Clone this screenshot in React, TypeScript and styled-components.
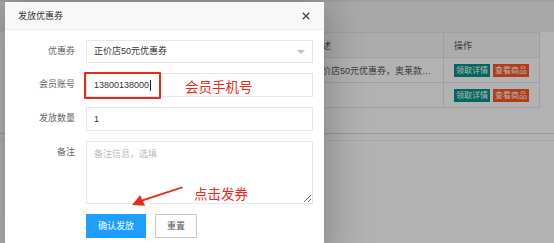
import React from "react";
import styled, { createGlobalStyle } from "styled-components";

const GlobalStyle = createGlobalStyle`
  html, body {
    margin: 0;
    padding: 0;
    background: #fff;
  }
  body {
    font-family: "Liberation Sans", "Noto Sans CJK SC", sans-serif;
  }
`;

const rows = [
  { desc: "正价店50元优惠券，奥莱款都可以使用" },
  { desc: "" }
];

const App: React.FC = () => {
  return (
    <Page>
      <GlobalStyle />
      <TopBand />
      <Table>
        <colgroup>
          <col width="287" />
          <col width="141" />
          <col width="96" />
        </colgroup>
        <thead>
          <tr>
            <Th>名称</Th>
            <Th>描述</Th>
            <Th>操作</Th>
          </tr>
        </thead>
        <tbody>
          {rows.map((r, i) => (
            <tr key={i}>
              <Td>正价店50元优惠券</Td>
              <Td>
                <Ellipsis>{r.desc}</Ellipsis>
              </Td>
              <Td>
                <Actions>
                  <MiniButton $tone="green">领取详情</MiniButton>
                  <MiniButton $tone="orange">查看商品</MiniButton>
                </Actions>
              </Td>
            </tr>
          ))}
        </tbody>
      </Table>
      <Pager />
      <Shade />

      <Dialog>
        <Header>
          <Title>发放优惠券</Title>
          <Close>
            <svg width="8" height="8" viewBox="0 0 8 8">
              <path d="M0.8 0.8 L7.2 7.2 M7.2 0.8 L0.8 7.2" stroke="#444" strokeWidth="1.3" />
            </svg>
          </Close>
        </Header>
        <Body>
          <Row>
            <Label>优惠券</Label>
            <Select>
              正价店50元优惠券
              <Caret />
            </Select>
          </Row>
          <Row>
            <Label>会员账号</Label>
            <Field>
              13800138000
              <Cursor />
            </Field>
            <Highlight />
            <Note $left={180} $top={6}>
              会员手机号
            </Note>
          </Row>
          <Row>
            <Label>发放数量</Label>
            <Field>1</Field>
          </Row>
          <Row>
            <Label>备注</Label>
            <Memo placeholder="备注信息，选填" />
          </Row>
          <Row>
            <Label />
            <Button $primary>确认发放</Button>
            <Button>重置</Button>
            <Note $left={189} $top={-28}>
              点击发券
            </Note>
            <Arrow width="52" height="22" viewBox="0 0 52 22">
              <path d="M50 0.6 L51 2 L11 15.2 L13 19.8 L0 19 L8.2 9 L10 13.4 Z" fill="#ee2a1f" />
            </Arrow>
          </Row>
        </Body>
      </Dialog>
    </Page>
  );
};

export default App;

const Page = styled.div`
  position: relative;
  width: 554px;
  height: 243px;
  overflow: hidden;
  background: #fff;
`;

const TopBand = styled.div`
  height: 30px;
  background: #f2f2f2;
  border-top: 2px solid #e6e6e6;
`;

const Table = styled.table`
  margin-left: 15px;
  width: 524px;
  border-collapse: collapse;
  table-layout: fixed;
  font-size: 9px;
  color: #555;
`;

const Th = styled.th`
  height: 24px;
  padding: 0 10px;
  text-align: left;
  font-weight: normal;
  background: #f6f6f6;
  border: 1px solid #e6e6e6;
`;

const Td = styled.td`
  height: 24px;
  padding: 0 10px;
  border: 1px solid #e6e6e6;
`;

const Ellipsis = styled.div`
  white-space: nowrap;
  overflow: hidden;
  text-overflow: ellipsis;
`;

const Actions = styled.div`
  display: flex;
  gap: 3px;
`;

const MiniButton = styled.span<{ $tone: "green" | "orange" }>`
  display: inline-block;
  height: 13px;
  line-height: 13px;
  padding: 0 2px;
  font-size: 8px;
  color: #fff;
  white-space: nowrap;
  background: ${(p) => (p.$tone === "green" ? "#009688" : "#ff5722")};
`;

const Pager = styled.div`
  margin-top: 25px;
  height: 6px;
  border-top: 1px solid #dcdcdc;
  border-bottom: 1px solid #efefef;
`;

const Shade = styled.div`
  position: absolute;
  inset: 0;
  background: rgba(0, 0, 0, 0.3);
`;

const Dialog = styled.div`
  position: absolute;
  left: 5px;
  top: 2px;
  width: 319px;
  height: 262px;
  background: #fff;
  box-shadow: 1px 1px 40px rgba(0, 0, 0, 0.3);
`;

const Header = styled.div`
  height: 27px;
  display: flex;
  align-items: center;
  justify-content: space-between;
  padding: 0 14px 0 13px;
  background: #f8f8f8;
  border-bottom: 1px solid #eee;
`;

const Title = styled.div`
  font-size: 9px;
  color: #333;
`;

const Close = styled.div`
  display: flex;
  align-items: center;
`;

const Body = styled.div`
  padding: 10px 11px 0 0;
`;

const Row = styled.div`
  position: relative;
  display: flex;
  align-items: flex-start;
  margin-bottom: 10px;
`;

const Label = styled.div`
  width: 70px;
  padding-right: 11px;
  flex-shrink: 0;
  text-align: right;
  line-height: 23px;
  font-size: 9px;
  color: #666;
`;

const Select = styled.div`
  position: relative;
  flex: 1;
  height: 23px;
  line-height: 21px;
  padding-left: 7px;
  box-sizing: border-box;
  border: 1px solid #e6e6e6;
  font-size: 9px;
  color: #333;
`;

const Caret = styled.span`
  position: absolute;
  right: 7px;
  top: 9px;
  border-style: solid;
  border-width: 4px 4px 0;
  border-color: #c2c2c2 transparent transparent;
`;

const Field = styled.div`
  flex: 1;
  display: flex;
  align-items: center;
  height: 24px;
  padding-left: 7px;
  box-sizing: border-box;
  border: 1px solid #e6e6e6;
  font-size: 9px;
  color: #333;
`;

const Cursor = styled.span`
  display: inline-block;
  width: 0;
  height: 11px;
  border-left: 1px solid #222;
  margin-left: 1px;
`;

const Highlight = styled.div`
  position: absolute;
  left: 79px;
  top: -1px;
  width: 77px;
  height: 27px;
  box-sizing: border-box;
  border: 2px solid #e8271d;
  border-radius: 1px;
`;

const Note = styled.div<{ $left: number; $top: number }>`
  position: absolute;
  left: ${(p) => p.$left}px;
  top: ${(p) => p.$top}px;
  font-size: 13.5px;
  line-height: 18px;
  color: #ee2a1f;
  white-space: nowrap;
`;

const Memo = styled.textarea`
  flex: 1;
  height: 63px;
  padding: 5px 7px;
  box-sizing: border-box;
  border: 1px solid #e6e6e6;
  border-radius: 0;
  outline: none;
  font-family: inherit;
  font-size: 9px;
  color: #333;
  &::placeholder {
    color: #bbb;
  }
`;

const Button = styled.div<{ $primary?: boolean }>`
  height: 24px;
  line-height: 22px;
  box-sizing: border-box;
  padding: 0 11px;
  margin-right: 9px;
  font-size: 9px;
  text-align: center;
  white-space: nowrap;
  color: ${(p) => (p.$primary ? "#fff" : "#555")};
  background: ${(p) => (p.$primary ? "#1e9fff" : "#fff")};
  border: 1px solid ${(p) => (p.$primary ? "#1e9fff" : "#c9c9c9")};
`;

const Arrow = styled.svg`
  position: absolute;
  left: 127px;
  top: -28px;
`;
